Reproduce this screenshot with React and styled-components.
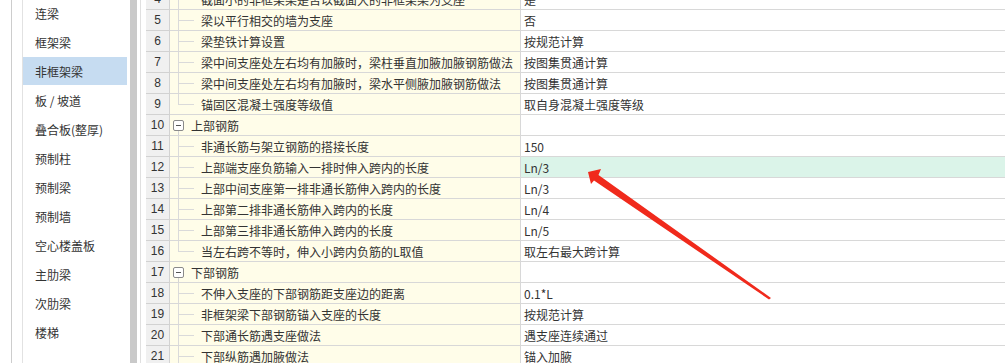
import React from "react";
import styled, { createGlobalStyle } from "styled-components";

const Global = createGlobalStyle`
  html, body { margin: 0; padding: 0; background: #fff; }
  body { font-family: "Noto Sans CJK SC", "Liberation Sans", sans-serif; font-size: 12px; color: #333; }
`;

const Page = styled.div`
  position: relative;
  display: flex;
  width: 1005px;
  height: 363px;
  overflow: hidden;
  background: #fff;
`;

const Gutter = styled.div`
  width: 11px;
  flex: none;
  border-right: 1px solid #cdcdcd;
`;

const SidePad = styled.div`
  width: 10px;
  flex: none;
  border-right: 1px solid #e2e2e2;
`;

const ItemList = styled.ul`
  list-style: none;
  margin: -2px 0 0;
  padding: 0;
  width: 105px;
  flex: none;
`;

const Item = styled.li`
  height: 28px;
  margin: 1px 1px 1px 0;
  padding-left: 12px;
  display: flex;
  align-items: center;
  font-size: 12px;
  color: #333;
  background: ${(p) => (p.$active ? "#c6dcf1" : "transparent")};
  white-space: nowrap;
`;

const ScrollTrack = styled.div`
  width: 13px;
  flex: none;
  padding: 0 3px 0 2px;
  box-sizing: border-box;
  border-right: 1px solid #e0e0e0;
  display: flex;
`;

const Thumb = styled.div`
  flex: 1;
  background: #c9c9c9;
`;

const Main = styled.div`
  flex: 1;
  padding-left: 5px;
  min-width: 0;
`;

const Table = styled.div`
  margin-top: -11px;
  display: grid;
  grid-template-columns: 24px 351px 1fr;
`;

const NumCell = styled.div`
  height: 20px;
  border-bottom: 1px solid #d2d2d2;
  border-right: 1px solid #d2d2d2;
  background: #f0f0f0;
  display: flex;
  align-items: center;
  justify-content: center;
  font-family: "Liberation Sans", sans-serif;
  font-size: 12px;
  color: #333;
`;

const NameCell = styled.div`
  height: 20px;
  border-bottom: 1px solid #d8d8d8;
  border-right: 1px solid #d8d8d8;
  background: #fffde9;
  display: flex;
  align-items: center;
  white-space: nowrap;
  overflow: hidden;
  color: #333;
`;

const GroupCell = styled(NameCell)`
  background: linear-gradient(#d4d4d4, #d4d4d4) 8px 100% / 1px 4px no-repeat, #fffde9;
`;

const Guide = styled.span`
  width: 31px;
  height: 100%;
  flex: none;
  background:
    linear-gradient(#dadada, #dadada) 8px 0 / 1px ${(p) => (p.$last ? "50%" : "100%")} no-repeat,
    linear-gradient(#dadada, #dadada) 8px 50% / 16px 1px no-repeat;
`;

const Toggle = styled.span`
  width: 9px;
  height: 9px;
  margin-left: 3px;
  margin-right: 7px;
  border: 1px solid #8a8a8a;
  border-radius: 2px;
  flex: none;
  background: linear-gradient(#555, #555) 50% 50% / 5px 1px no-repeat, #fff;
`;

const ValueCell = styled.div`
  height: 20px;
  border-bottom: 1px solid #d8d8d8;
  padding-left: 3px;
  background: ${(p) => (p.$selected ? "#dbf4e9" : "#fff")};
  display: flex;
  align-items: center;
  white-space: nowrap;
  color: #333;
`;

const Arrow = styled.svg`
  position: absolute;
  left: 0;
  top: 0;
  pointer-events: none;
`;

const sideItems = [
  "连梁",
  "框架梁",
  "非框架梁",
  "板 / 坡道",
  "叠合板(整厚)",
  "预制柱",
  "预制梁",
  "预制墙",
  "空心楼盖板",
  "主肋梁",
  "次肋梁",
  "楼梯",
];

const rows = [
  { n: 4, name: "截面小的非框架梁是否以截面大的非框架梁为支座", value: "是" },
  { n: 5, name: "梁以平行相交的墙为支座", value: "否" },
  { n: 6, name: "梁垫铁计算设置", value: "按规范计算" },
  { n: 7, name: "梁中间支座处左右均有加腋时，梁柱垂直加腋加腋钢筋做法", value: "按图集贯通计算" },
  { n: 8, name: "梁中间支座处左右均有加腋时，梁水平侧腋加腋钢筋做法", value: "按图集贯通计算" },
  { n: 9, name: "锚固区混凝土强度等级值", value: "取自身混凝土强度等级", last: true },
  { n: 10, name: "上部钢筋", group: true },
  { n: 11, name: "非通长筋与架立钢筋的搭接长度", value: "150" },
  { n: 12, name: "上部端支座负筋输入一排时伸入跨内的长度", value: "Ln/3", selected: true },
  { n: 13, name: "上部中间支座第一排非通长筋伸入跨内的长度", value: "Ln/3" },
  { n: 14, name: "上部第二排非通长筋伸入跨内的长度", value: "Ln/4" },
  { n: 15, name: "上部第三排非通长筋伸入跨内的长度", value: "Ln/5" },
  { n: 16, name: "当左右跨不等时，伸入小跨内负筋的L取值", value: "取左右最大跨计算", last: true },
  { n: 17, name: "下部钢筋", group: true },
  { n: 18, name: "不伸入支座的下部钢筋距支座边的距离", value: "0.1*L" },
  { n: 19, name: "非框架梁下部钢筋锚入支座的长度", value: "按规范计算" },
  { n: 20, name: "下部通长筋遇支座做法", value: "遇支座连续通过" },
  { n: 21, name: "下部纵筋遇加腋做法", value: "锚入加腋" },
];

export default function App() {
  return (
    <>
      <Global />
      <Page>
        <Gutter />
        <SidePad />
        <ItemList>
          {sideItems.map((t) => (
            <Item key={t} $active={t === "非框架梁"}>
              {t}
            </Item>
          ))}
        </ItemList>
        <ScrollTrack>
          <Thumb />
        </ScrollTrack>
        <Main>
          <Table>
            {rows.map((r) => (
              <React.Fragment key={r.n}>
                <NumCell>{r.n}</NumCell>
                {r.group ? (
                  <GroupCell>
                    <Toggle />
                    {r.name}
                  </GroupCell>
                ) : (
                  <NameCell>
                    <Guide $last={r.last} />
                    {r.name}
                  </NameCell>
                )}
                <ValueCell $selected={r.selected}>{r.value || ""}</ValueCell>
              </React.Fragment>
            ))}
          </Table>
        </Main>
        <Arrow width="1005" height="363" viewBox="0 0 1005 363">
          <polygon
            points="588,172 601,169 598.5,175 771,298 769,299.5 594,180.5 591,184"
            fill="#f02a1c"
          />
        </Arrow>
      </Page>
    </>
  );
}
